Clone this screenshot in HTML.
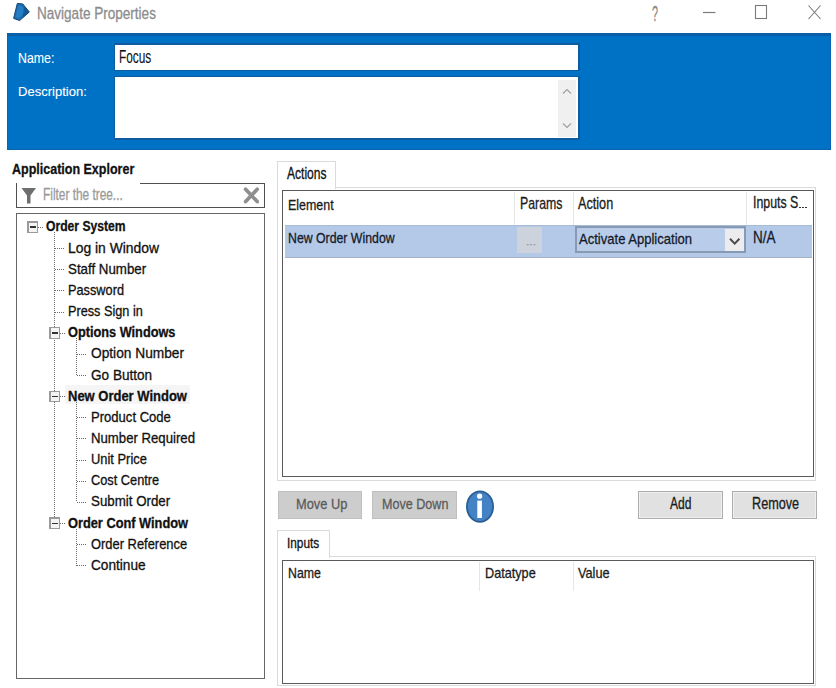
<!DOCTYPE html>
<html><head><meta charset="utf-8"><style>
html,body{margin:0;padding:0;}
body{width:836px;height:688px;position:relative;overflow:hidden;background:#fff;font-family:"Liberation Sans",sans-serif;}
.t{position:absolute;white-space:nowrap;transform-origin:0 0;}
.b{position:absolute;}
</style></head><body>
<svg class="b" style="left:0;top:0" width="836" height="32" viewBox="0 0 836 32"><path d="M17.3 3.4 L22.8 3.9 L29.3 12 L19.6 20.6 L13.6 18.4 Z" fill="#1b6db3" stroke="#0f3c68" stroke-width="0.9" stroke-linejoin="round"/><path d="M18.5 5.5 L22 6 L25.5 12 L19 18 L15.5 16.8 Z" fill="#2a86cc" opacity="0.7"/><path d="M24 6.5 L29.3 12 L22.5 18 Z" fill="#0f4a80" opacity="0.6"/><line x1="703" y1="12.5" x2="715.5" y2="12.5" stroke="#7a7a7a" stroke-width="1.2"/><rect x="755.5" y="5.5" width="11" height="13" fill="none" stroke="#7a7a7a" stroke-width="1.1"/><path d="M808.5 5.5 L820.5 19 M820.5 5.5 L808.5 19" stroke="#7a7a7a" stroke-width="1.1"/></svg>
<div class="t" style="left:36.60px;top:4.30px;font-size:16.86px;line-height:19px;transform:scaleX(0.8030);color:#8c8c8c;-webkit-text-stroke:0.3px #8c8c8c;">Navigate Properties</div>
<div class="t" style="left:652.00px;top:0.50px;font-size:21.80px;line-height:25px;transform:scaleX(0.4950);color:#8a8a8a;-webkit-text-stroke:0.3px #8a8a8a;">?</div>
<div class="b" style="left:6.5px;top:33px;width:824.0px;height:117px;background:#0072c6;border:1px solid #0a64b4;box-sizing:border-box;"></div>
<div class="b" style="left:6.5px;top:33px;width:824.0px;height:2.5px;background:#0a5ea8;"></div>
<div class="b" style="left:113.5px;top:43px;width:466.0px;height:28px;background:#0d5c9f;"></div>
<div class="b" style="left:115px;top:45px;width:463px;height:25px;background:#fff;"></div>
<div class="b" style="left:113.5px;top:75.5px;width:466.0px;height:64.0px;background:#0d5c9f;"></div>
<div class="b" style="left:115px;top:77px;width:463px;height:61px;background:#fff;"></div>
<div class="b" style="left:558px;top:80px;width:18px;height:57px;background:#f0f0f0;"></div>
<svg class="b" style="left:558px;top:80px" width="18" height="57" viewBox="0 0 18 57"><path d="M5 13.5 L9 9.5 L13 13.5" fill="none" stroke="#a0a0a0" stroke-width="1.2"/><path d="M5 43.5 L9 47.5 L13 43.5" fill="none" stroke="#a0a0a0" stroke-width="1.2"/></svg>
<div class="t" style="left:17.75px;top:49.80px;font-size:14.10px;line-height:16px;transform:scaleX(0.8754);color:#ffffff;-webkit-text-stroke:0.1px #ffffff;">Name:</div>
<div class="t" style="left:17.75px;top:83.60px;font-size:13.37px;line-height:15px;transform:scaleX(0.9751);color:#ffffff;-webkit-text-stroke:0.1px #ffffff;">Description:</div>
<div class="t" style="left:118.50px;top:46.50px;font-size:17.44px;line-height:20px;transform:scaleX(0.6801);color:#111;-webkit-text-stroke:0.1px #111;">Focus</div>
<div class="t" style="left:11.70px;top:159.80px;font-size:15.12px;line-height:17px;transform:scaleX(0.8273);color:#111;font-weight:bold;-webkit-text-stroke:0.3px #111;">Application Explorer</div>
<div class="b" style="left:15.8px;top:182.6px;width:1.5px;height:25.400000000000006px;background:#505050;"></div>
<div class="b" style="left:140px;top:182.6px;width:125px;height:1.5px;background:#505050;"></div>
<div class="b" style="left:263.6px;top:182.6px;width:1.5px;height:25.400000000000006px;background:#505050;"></div>
<div class="b" style="left:15.8px;top:206.6px;width:249.3px;height:1.5px;background:#505050;"></div>
<svg class="b" style="left:0;top:180px" width="280" height="30" viewBox="0 180 280 30"><path d="M21.5 188 L36 188 L30.5 195.5 L30.5 203.5 L27 203.5 L27 195.5 Z" fill="#6e6e6e"/><path d="M245.6 189.3 L257.2 201.6 M257.2 189.3 L245.6 201.6" stroke="#8e8e8e" stroke-width="3.7" stroke-linecap="round"/></svg>
<div class="t" style="left:43.20px;top:186.20px;font-size:15.84px;line-height:17px;transform:scaleX(0.7490);color:#9a9a9a;-webkit-text-stroke:0.3px #9a9a9a;">Filter the tree...</div>
<div class="b" style="left:15.5px;top:213px;width:249.5px;height:466px;border:1.5px solid #666;box-sizing:border-box;"></div>
<div class="b" style="left:65px;top:385px;width:125px;height:19px;background:#f5f5f6;"></div>
<div class="t" style="left:45.80px;top:218.40px;font-size:14.10px;line-height:16px;transform:scaleX(0.8618);color:#111;font-weight:bold;-webkit-text-stroke:0.3px #111;">Order System</div>
<div class="t" style="left:68.40px;top:239.56px;font-size:14.10px;line-height:16px;transform:scaleX(0.9847);color:#111;-webkit-text-stroke:0.3px #111;">Log in Window</div>
<div class="t" style="left:68.40px;top:260.72px;font-size:14.10px;line-height:16px;transform:scaleX(0.9444);color:#111;-webkit-text-stroke:0.3px #111;">Staff Number</div>
<div class="t" style="left:68.40px;top:281.88px;font-size:14.10px;line-height:16px;transform:scaleX(0.9046);color:#111;-webkit-text-stroke:0.3px #111;">Password</div>
<div class="t" style="left:68.40px;top:303.04px;font-size:14.10px;line-height:16px;transform:scaleX(0.9004);color:#111;-webkit-text-stroke:0.3px #111;">Press Sign in</div>
<div class="t" style="left:68.40px;top:324.20px;font-size:14.10px;line-height:16px;transform:scaleX(0.9039);color:#111;font-weight:bold;-webkit-text-stroke:0.3px #111;">Options Windows</div>
<div class="t" style="left:90.80px;top:345.36px;font-size:14.10px;line-height:16px;transform:scaleX(0.9738);color:#111;-webkit-text-stroke:0.3px #111;">Option Number</div>
<div class="t" style="left:90.80px;top:366.52px;font-size:14.10px;line-height:16px;transform:scaleX(0.9640);color:#111;-webkit-text-stroke:0.3px #111;">Go Button</div>
<div class="t" style="left:68.40px;top:387.68px;font-size:14.10px;line-height:16px;transform:scaleX(0.9214);color:#111;font-weight:bold;-webkit-text-stroke:0.3px #111;">New Order Window</div>
<div class="t" style="left:90.80px;top:408.84px;font-size:14.10px;line-height:16px;transform:scaleX(0.9267);color:#111;-webkit-text-stroke:0.3px #111;">Product Code</div>
<div class="t" style="left:90.80px;top:430.00px;font-size:14.10px;line-height:16px;transform:scaleX(0.9345);color:#111;-webkit-text-stroke:0.3px #111;">Number Required</div>
<div class="t" style="left:90.80px;top:451.16px;font-size:14.10px;line-height:16px;transform:scaleX(0.9146);color:#111;-webkit-text-stroke:0.3px #111;">Unit Price</div>
<div class="t" style="left:90.80px;top:472.32px;font-size:14.10px;line-height:16px;transform:scaleX(0.9067);color:#111;-webkit-text-stroke:0.3px #111;">Cost Centre</div>
<div class="t" style="left:90.80px;top:493.48px;font-size:14.10px;line-height:16px;transform:scaleX(0.9447);color:#111;-webkit-text-stroke:0.3px #111;">Submit Order</div>
<div class="t" style="left:68.40px;top:514.64px;font-size:14.10px;line-height:16px;transform:scaleX(0.9080);color:#111;font-weight:bold;-webkit-text-stroke:0.3px #111;">Order Conf Window</div>
<div class="t" style="left:90.80px;top:535.80px;font-size:14.10px;line-height:16px;transform:scaleX(0.9161);color:#111;-webkit-text-stroke:0.3px #111;">Order Reference</div>
<div class="t" style="left:90.80px;top:556.96px;font-size:14.10px;line-height:16px;transform:scaleX(0.9674);color:#111;-webkit-text-stroke:0.3px #111;">Continue</div>
<svg class="b" style="left:0;top:0" width="280" height="688" viewBox="0 0 280 688" shape-rendering="crispEdges"><rect x="38" y="227" width="1" height="1" fill="#6a6a6a"/><rect x="40" y="227" width="1" height="1" fill="#6a6a6a"/><rect x="42" y="227" width="1" height="1" fill="#6a6a6a"/><rect x="55" y="248" width="1" height="1" fill="#6a6a6a"/><rect x="57" y="248" width="1" height="1" fill="#6a6a6a"/><rect x="59" y="248" width="1" height="1" fill="#6a6a6a"/><rect x="61" y="248" width="1" height="1" fill="#6a6a6a"/><rect x="63" y="248" width="1" height="1" fill="#6a6a6a"/><rect x="55" y="269" width="1" height="1" fill="#6a6a6a"/><rect x="57" y="269" width="1" height="1" fill="#6a6a6a"/><rect x="59" y="269" width="1" height="1" fill="#6a6a6a"/><rect x="61" y="269" width="1" height="1" fill="#6a6a6a"/><rect x="63" y="269" width="1" height="1" fill="#6a6a6a"/><rect x="55" y="290" width="1" height="1" fill="#6a6a6a"/><rect x="57" y="290" width="1" height="1" fill="#6a6a6a"/><rect x="59" y="290" width="1" height="1" fill="#6a6a6a"/><rect x="61" y="290" width="1" height="1" fill="#6a6a6a"/><rect x="63" y="290" width="1" height="1" fill="#6a6a6a"/><rect x="55" y="312" width="1" height="1" fill="#6a6a6a"/><rect x="57" y="312" width="1" height="1" fill="#6a6a6a"/><rect x="59" y="312" width="1" height="1" fill="#6a6a6a"/><rect x="61" y="312" width="1" height="1" fill="#6a6a6a"/><rect x="63" y="312" width="1" height="1" fill="#6a6a6a"/><rect x="60" y="333" width="1" height="1" fill="#6a6a6a"/><rect x="62" y="333" width="1" height="1" fill="#6a6a6a"/><rect x="64" y="333" width="1" height="1" fill="#6a6a6a"/><rect x="77" y="354" width="1" height="1" fill="#6a6a6a"/><rect x="79" y="354" width="1" height="1" fill="#6a6a6a"/><rect x="81" y="354" width="1" height="1" fill="#6a6a6a"/><rect x="83" y="354" width="1" height="1" fill="#6a6a6a"/><rect x="85" y="354" width="1" height="1" fill="#6a6a6a"/><rect x="77" y="375" width="1" height="1" fill="#6a6a6a"/><rect x="79" y="375" width="1" height="1" fill="#6a6a6a"/><rect x="81" y="375" width="1" height="1" fill="#6a6a6a"/><rect x="83" y="375" width="1" height="1" fill="#6a6a6a"/><rect x="85" y="375" width="1" height="1" fill="#6a6a6a"/><rect x="60" y="396" width="1" height="1" fill="#6a6a6a"/><rect x="62" y="396" width="1" height="1" fill="#6a6a6a"/><rect x="64" y="396" width="1" height="1" fill="#6a6a6a"/><rect x="77" y="417" width="1" height="1" fill="#6a6a6a"/><rect x="79" y="417" width="1" height="1" fill="#6a6a6a"/><rect x="81" y="417" width="1" height="1" fill="#6a6a6a"/><rect x="83" y="417" width="1" height="1" fill="#6a6a6a"/><rect x="85" y="417" width="1" height="1" fill="#6a6a6a"/><rect x="77" y="438" width="1" height="1" fill="#6a6a6a"/><rect x="79" y="438" width="1" height="1" fill="#6a6a6a"/><rect x="81" y="438" width="1" height="1" fill="#6a6a6a"/><rect x="83" y="438" width="1" height="1" fill="#6a6a6a"/><rect x="85" y="438" width="1" height="1" fill="#6a6a6a"/><rect x="77" y="460" width="1" height="1" fill="#6a6a6a"/><rect x="79" y="460" width="1" height="1" fill="#6a6a6a"/><rect x="81" y="460" width="1" height="1" fill="#6a6a6a"/><rect x="83" y="460" width="1" height="1" fill="#6a6a6a"/><rect x="85" y="460" width="1" height="1" fill="#6a6a6a"/><rect x="77" y="481" width="1" height="1" fill="#6a6a6a"/><rect x="79" y="481" width="1" height="1" fill="#6a6a6a"/><rect x="81" y="481" width="1" height="1" fill="#6a6a6a"/><rect x="83" y="481" width="1" height="1" fill="#6a6a6a"/><rect x="85" y="481" width="1" height="1" fill="#6a6a6a"/><rect x="77" y="502" width="1" height="1" fill="#6a6a6a"/><rect x="79" y="502" width="1" height="1" fill="#6a6a6a"/><rect x="81" y="502" width="1" height="1" fill="#6a6a6a"/><rect x="83" y="502" width="1" height="1" fill="#6a6a6a"/><rect x="85" y="502" width="1" height="1" fill="#6a6a6a"/><rect x="60" y="523" width="1" height="1" fill="#6a6a6a"/><rect x="62" y="523" width="1" height="1" fill="#6a6a6a"/><rect x="64" y="523" width="1" height="1" fill="#6a6a6a"/><rect x="77" y="544" width="1" height="1" fill="#6a6a6a"/><rect x="79" y="544" width="1" height="1" fill="#6a6a6a"/><rect x="81" y="544" width="1" height="1" fill="#6a6a6a"/><rect x="83" y="544" width="1" height="1" fill="#6a6a6a"/><rect x="85" y="544" width="1" height="1" fill="#6a6a6a"/><rect x="77" y="565" width="1" height="1" fill="#6a6a6a"/><rect x="79" y="565" width="1" height="1" fill="#6a6a6a"/><rect x="81" y="565" width="1" height="1" fill="#6a6a6a"/><rect x="83" y="565" width="1" height="1" fill="#6a6a6a"/><rect x="85" y="565" width="1" height="1" fill="#6a6a6a"/><rect x="54" y="232" width="1" height="1" fill="#6a6a6a"/><rect x="54" y="234" width="1" height="1" fill="#6a6a6a"/><rect x="54" y="236" width="1" height="1" fill="#6a6a6a"/><rect x="54" y="238" width="1" height="1" fill="#6a6a6a"/><rect x="54" y="240" width="1" height="1" fill="#6a6a6a"/><rect x="54" y="242" width="1" height="1" fill="#6a6a6a"/><rect x="54" y="244" width="1" height="1" fill="#6a6a6a"/><rect x="54" y="246" width="1" height="1" fill="#6a6a6a"/><rect x="54" y="248" width="1" height="1" fill="#6a6a6a"/><rect x="54" y="250" width="1" height="1" fill="#6a6a6a"/><rect x="54" y="252" width="1" height="1" fill="#6a6a6a"/><rect x="54" y="254" width="1" height="1" fill="#6a6a6a"/><rect x="54" y="256" width="1" height="1" fill="#6a6a6a"/><rect x="54" y="258" width="1" height="1" fill="#6a6a6a"/><rect x="54" y="260" width="1" height="1" fill="#6a6a6a"/><rect x="54" y="262" width="1" height="1" fill="#6a6a6a"/><rect x="54" y="264" width="1" height="1" fill="#6a6a6a"/><rect x="54" y="266" width="1" height="1" fill="#6a6a6a"/><rect x="54" y="268" width="1" height="1" fill="#6a6a6a"/><rect x="54" y="270" width="1" height="1" fill="#6a6a6a"/><rect x="54" y="272" width="1" height="1" fill="#6a6a6a"/><rect x="54" y="274" width="1" height="1" fill="#6a6a6a"/><rect x="54" y="276" width="1" height="1" fill="#6a6a6a"/><rect x="54" y="278" width="1" height="1" fill="#6a6a6a"/><rect x="54" y="280" width="1" height="1" fill="#6a6a6a"/><rect x="54" y="282" width="1" height="1" fill="#6a6a6a"/><rect x="54" y="284" width="1" height="1" fill="#6a6a6a"/><rect x="54" y="286" width="1" height="1" fill="#6a6a6a"/><rect x="54" y="288" width="1" height="1" fill="#6a6a6a"/><rect x="54" y="290" width="1" height="1" fill="#6a6a6a"/><rect x="54" y="292" width="1" height="1" fill="#6a6a6a"/><rect x="54" y="294" width="1" height="1" fill="#6a6a6a"/><rect x="54" y="296" width="1" height="1" fill="#6a6a6a"/><rect x="54" y="298" width="1" height="1" fill="#6a6a6a"/><rect x="54" y="300" width="1" height="1" fill="#6a6a6a"/><rect x="54" y="302" width="1" height="1" fill="#6a6a6a"/><rect x="54" y="304" width="1" height="1" fill="#6a6a6a"/><rect x="54" y="306" width="1" height="1" fill="#6a6a6a"/><rect x="54" y="308" width="1" height="1" fill="#6a6a6a"/><rect x="54" y="310" width="1" height="1" fill="#6a6a6a"/><rect x="54" y="312" width="1" height="1" fill="#6a6a6a"/><rect x="54" y="314" width="1" height="1" fill="#6a6a6a"/><rect x="54" y="316" width="1" height="1" fill="#6a6a6a"/><rect x="54" y="318" width="1" height="1" fill="#6a6a6a"/><rect x="54" y="320" width="1" height="1" fill="#6a6a6a"/><rect x="54" y="322" width="1" height="1" fill="#6a6a6a"/><rect x="54" y="324" width="1" height="1" fill="#6a6a6a"/><rect x="54" y="326" width="1" height="1" fill="#6a6a6a"/><rect x="54" y="328" width="1" height="1" fill="#6a6a6a"/><rect x="54" y="330" width="1" height="1" fill="#6a6a6a"/><rect x="54" y="332" width="1" height="1" fill="#6a6a6a"/><rect x="54" y="334" width="1" height="1" fill="#6a6a6a"/><rect x="54" y="336" width="1" height="1" fill="#6a6a6a"/><rect x="54" y="338" width="1" height="1" fill="#6a6a6a"/><rect x="54" y="340" width="1" height="1" fill="#6a6a6a"/><rect x="54" y="342" width="1" height="1" fill="#6a6a6a"/><rect x="54" y="344" width="1" height="1" fill="#6a6a6a"/><rect x="54" y="346" width="1" height="1" fill="#6a6a6a"/><rect x="54" y="348" width="1" height="1" fill="#6a6a6a"/><rect x="54" y="350" width="1" height="1" fill="#6a6a6a"/><rect x="54" y="352" width="1" height="1" fill="#6a6a6a"/><rect x="54" y="354" width="1" height="1" fill="#6a6a6a"/><rect x="54" y="356" width="1" height="1" fill="#6a6a6a"/><rect x="54" y="358" width="1" height="1" fill="#6a6a6a"/><rect x="54" y="360" width="1" height="1" fill="#6a6a6a"/><rect x="54" y="362" width="1" height="1" fill="#6a6a6a"/><rect x="54" y="364" width="1" height="1" fill="#6a6a6a"/><rect x="54" y="366" width="1" height="1" fill="#6a6a6a"/><rect x="54" y="368" width="1" height="1" fill="#6a6a6a"/><rect x="54" y="370" width="1" height="1" fill="#6a6a6a"/><rect x="54" y="372" width="1" height="1" fill="#6a6a6a"/><rect x="54" y="374" width="1" height="1" fill="#6a6a6a"/><rect x="54" y="376" width="1" height="1" fill="#6a6a6a"/><rect x="54" y="378" width="1" height="1" fill="#6a6a6a"/><rect x="54" y="380" width="1" height="1" fill="#6a6a6a"/><rect x="54" y="382" width="1" height="1" fill="#6a6a6a"/><rect x="54" y="384" width="1" height="1" fill="#6a6a6a"/><rect x="54" y="386" width="1" height="1" fill="#6a6a6a"/><rect x="54" y="388" width="1" height="1" fill="#6a6a6a"/><rect x="54" y="390" width="1" height="1" fill="#6a6a6a"/><rect x="54" y="392" width="1" height="1" fill="#6a6a6a"/><rect x="54" y="394" width="1" height="1" fill="#6a6a6a"/><rect x="54" y="396" width="1" height="1" fill="#6a6a6a"/><rect x="54" y="398" width="1" height="1" fill="#6a6a6a"/><rect x="54" y="400" width="1" height="1" fill="#6a6a6a"/><rect x="54" y="402" width="1" height="1" fill="#6a6a6a"/><rect x="54" y="404" width="1" height="1" fill="#6a6a6a"/><rect x="54" y="406" width="1" height="1" fill="#6a6a6a"/><rect x="54" y="408" width="1" height="1" fill="#6a6a6a"/><rect x="54" y="410" width="1" height="1" fill="#6a6a6a"/><rect x="54" y="412" width="1" height="1" fill="#6a6a6a"/><rect x="54" y="414" width="1" height="1" fill="#6a6a6a"/><rect x="54" y="416" width="1" height="1" fill="#6a6a6a"/><rect x="54" y="418" width="1" height="1" fill="#6a6a6a"/><rect x="54" y="420" width="1" height="1" fill="#6a6a6a"/><rect x="54" y="422" width="1" height="1" fill="#6a6a6a"/><rect x="54" y="424" width="1" height="1" fill="#6a6a6a"/><rect x="54" y="426" width="1" height="1" fill="#6a6a6a"/><rect x="54" y="428" width="1" height="1" fill="#6a6a6a"/><rect x="54" y="430" width="1" height="1" fill="#6a6a6a"/><rect x="54" y="432" width="1" height="1" fill="#6a6a6a"/><rect x="54" y="434" width="1" height="1" fill="#6a6a6a"/><rect x="54" y="436" width="1" height="1" fill="#6a6a6a"/><rect x="54" y="438" width="1" height="1" fill="#6a6a6a"/><rect x="54" y="440" width="1" height="1" fill="#6a6a6a"/><rect x="54" y="442" width="1" height="1" fill="#6a6a6a"/><rect x="54" y="444" width="1" height="1" fill="#6a6a6a"/><rect x="54" y="446" width="1" height="1" fill="#6a6a6a"/><rect x="54" y="448" width="1" height="1" fill="#6a6a6a"/><rect x="54" y="450" width="1" height="1" fill="#6a6a6a"/><rect x="54" y="452" width="1" height="1" fill="#6a6a6a"/><rect x="54" y="454" width="1" height="1" fill="#6a6a6a"/><rect x="54" y="456" width="1" height="1" fill="#6a6a6a"/><rect x="54" y="458" width="1" height="1" fill="#6a6a6a"/><rect x="54" y="460" width="1" height="1" fill="#6a6a6a"/><rect x="54" y="462" width="1" height="1" fill="#6a6a6a"/><rect x="54" y="464" width="1" height="1" fill="#6a6a6a"/><rect x="54" y="466" width="1" height="1" fill="#6a6a6a"/><rect x="54" y="468" width="1" height="1" fill="#6a6a6a"/><rect x="54" y="470" width="1" height="1" fill="#6a6a6a"/><rect x="54" y="472" width="1" height="1" fill="#6a6a6a"/><rect x="54" y="474" width="1" height="1" fill="#6a6a6a"/><rect x="54" y="476" width="1" height="1" fill="#6a6a6a"/><rect x="54" y="478" width="1" height="1" fill="#6a6a6a"/><rect x="54" y="480" width="1" height="1" fill="#6a6a6a"/><rect x="54" y="482" width="1" height="1" fill="#6a6a6a"/><rect x="54" y="484" width="1" height="1" fill="#6a6a6a"/><rect x="54" y="486" width="1" height="1" fill="#6a6a6a"/><rect x="54" y="488" width="1" height="1" fill="#6a6a6a"/><rect x="54" y="490" width="1" height="1" fill="#6a6a6a"/><rect x="54" y="492" width="1" height="1" fill="#6a6a6a"/><rect x="54" y="494" width="1" height="1" fill="#6a6a6a"/><rect x="54" y="496" width="1" height="1" fill="#6a6a6a"/><rect x="54" y="498" width="1" height="1" fill="#6a6a6a"/><rect x="54" y="500" width="1" height="1" fill="#6a6a6a"/><rect x="54" y="502" width="1" height="1" fill="#6a6a6a"/><rect x="54" y="504" width="1" height="1" fill="#6a6a6a"/><rect x="54" y="506" width="1" height="1" fill="#6a6a6a"/><rect x="54" y="508" width="1" height="1" fill="#6a6a6a"/><rect x="54" y="510" width="1" height="1" fill="#6a6a6a"/><rect x="54" y="512" width="1" height="1" fill="#6a6a6a"/><rect x="54" y="514" width="1" height="1" fill="#6a6a6a"/><rect x="54" y="516" width="1" height="1" fill="#6a6a6a"/><rect x="54" y="518" width="1" height="1" fill="#6a6a6a"/><rect x="76" y="338" width="1" height="1" fill="#6a6a6a"/><rect x="76" y="340" width="1" height="1" fill="#6a6a6a"/><rect x="76" y="342" width="1" height="1" fill="#6a6a6a"/><rect x="76" y="344" width="1" height="1" fill="#6a6a6a"/><rect x="76" y="346" width="1" height="1" fill="#6a6a6a"/><rect x="76" y="348" width="1" height="1" fill="#6a6a6a"/><rect x="76" y="350" width="1" height="1" fill="#6a6a6a"/><rect x="76" y="352" width="1" height="1" fill="#6a6a6a"/><rect x="76" y="354" width="1" height="1" fill="#6a6a6a"/><rect x="76" y="356" width="1" height="1" fill="#6a6a6a"/><rect x="76" y="358" width="1" height="1" fill="#6a6a6a"/><rect x="76" y="360" width="1" height="1" fill="#6a6a6a"/><rect x="76" y="362" width="1" height="1" fill="#6a6a6a"/><rect x="76" y="364" width="1" height="1" fill="#6a6a6a"/><rect x="76" y="366" width="1" height="1" fill="#6a6a6a"/><rect x="76" y="368" width="1" height="1" fill="#6a6a6a"/><rect x="76" y="370" width="1" height="1" fill="#6a6a6a"/><rect x="76" y="372" width="1" height="1" fill="#6a6a6a"/><rect x="76" y="374" width="1" height="1" fill="#6a6a6a"/><rect x="76" y="402" width="1" height="1" fill="#6a6a6a"/><rect x="76" y="404" width="1" height="1" fill="#6a6a6a"/><rect x="76" y="406" width="1" height="1" fill="#6a6a6a"/><rect x="76" y="408" width="1" height="1" fill="#6a6a6a"/><rect x="76" y="410" width="1" height="1" fill="#6a6a6a"/><rect x="76" y="412" width="1" height="1" fill="#6a6a6a"/><rect x="76" y="414" width="1" height="1" fill="#6a6a6a"/><rect x="76" y="416" width="1" height="1" fill="#6a6a6a"/><rect x="76" y="418" width="1" height="1" fill="#6a6a6a"/><rect x="76" y="420" width="1" height="1" fill="#6a6a6a"/><rect x="76" y="422" width="1" height="1" fill="#6a6a6a"/><rect x="76" y="424" width="1" height="1" fill="#6a6a6a"/><rect x="76" y="426" width="1" height="1" fill="#6a6a6a"/><rect x="76" y="428" width="1" height="1" fill="#6a6a6a"/><rect x="76" y="430" width="1" height="1" fill="#6a6a6a"/><rect x="76" y="432" width="1" height="1" fill="#6a6a6a"/><rect x="76" y="434" width="1" height="1" fill="#6a6a6a"/><rect x="76" y="436" width="1" height="1" fill="#6a6a6a"/><rect x="76" y="438" width="1" height="1" fill="#6a6a6a"/><rect x="76" y="440" width="1" height="1" fill="#6a6a6a"/><rect x="76" y="442" width="1" height="1" fill="#6a6a6a"/><rect x="76" y="444" width="1" height="1" fill="#6a6a6a"/><rect x="76" y="446" width="1" height="1" fill="#6a6a6a"/><rect x="76" y="448" width="1" height="1" fill="#6a6a6a"/><rect x="76" y="450" width="1" height="1" fill="#6a6a6a"/><rect x="76" y="452" width="1" height="1" fill="#6a6a6a"/><rect x="76" y="454" width="1" height="1" fill="#6a6a6a"/><rect x="76" y="456" width="1" height="1" fill="#6a6a6a"/><rect x="76" y="458" width="1" height="1" fill="#6a6a6a"/><rect x="76" y="460" width="1" height="1" fill="#6a6a6a"/><rect x="76" y="462" width="1" height="1" fill="#6a6a6a"/><rect x="76" y="464" width="1" height="1" fill="#6a6a6a"/><rect x="76" y="466" width="1" height="1" fill="#6a6a6a"/><rect x="76" y="468" width="1" height="1" fill="#6a6a6a"/><rect x="76" y="470" width="1" height="1" fill="#6a6a6a"/><rect x="76" y="472" width="1" height="1" fill="#6a6a6a"/><rect x="76" y="474" width="1" height="1" fill="#6a6a6a"/><rect x="76" y="476" width="1" height="1" fill="#6a6a6a"/><rect x="76" y="478" width="1" height="1" fill="#6a6a6a"/><rect x="76" y="480" width="1" height="1" fill="#6a6a6a"/><rect x="76" y="482" width="1" height="1" fill="#6a6a6a"/><rect x="76" y="484" width="1" height="1" fill="#6a6a6a"/><rect x="76" y="486" width="1" height="1" fill="#6a6a6a"/><rect x="76" y="488" width="1" height="1" fill="#6a6a6a"/><rect x="76" y="490" width="1" height="1" fill="#6a6a6a"/><rect x="76" y="492" width="1" height="1" fill="#6a6a6a"/><rect x="76" y="494" width="1" height="1" fill="#6a6a6a"/><rect x="76" y="496" width="1" height="1" fill="#6a6a6a"/><rect x="76" y="498" width="1" height="1" fill="#6a6a6a"/><rect x="76" y="500" width="1" height="1" fill="#6a6a6a"/><rect x="76" y="529" width="1" height="1" fill="#6a6a6a"/><rect x="76" y="531" width="1" height="1" fill="#6a6a6a"/><rect x="76" y="533" width="1" height="1" fill="#6a6a6a"/><rect x="76" y="535" width="1" height="1" fill="#6a6a6a"/><rect x="76" y="537" width="1" height="1" fill="#6a6a6a"/><rect x="76" y="539" width="1" height="1" fill="#6a6a6a"/><rect x="76" y="541" width="1" height="1" fill="#6a6a6a"/><rect x="76" y="543" width="1" height="1" fill="#6a6a6a"/><rect x="76" y="545" width="1" height="1" fill="#6a6a6a"/><rect x="76" y="547" width="1" height="1" fill="#6a6a6a"/><rect x="76" y="549" width="1" height="1" fill="#6a6a6a"/><rect x="76" y="551" width="1" height="1" fill="#6a6a6a"/><rect x="76" y="553" width="1" height="1" fill="#6a6a6a"/><rect x="76" y="555" width="1" height="1" fill="#6a6a6a"/><rect x="76" y="557" width="1" height="1" fill="#6a6a6a"/><rect x="76" y="559" width="1" height="1" fill="#6a6a6a"/><rect x="76" y="561" width="1" height="1" fill="#6a6a6a"/><rect x="76" y="563" width="1" height="1" fill="#6a6a6a"/><rect x="76" y="565" width="1" height="1" fill="#6a6a6a"/><rect x="28.0" y="221.9" width="9.5" height="10.5" fill="#f4f4f4" stroke="#9a9a9a" stroke-width="1.3"/><line x1="30.0" y1="227.15" x2="35.5" y2="227.15" stroke="#333" stroke-width="1.4"/><rect x="50.0" y="327.7" width="9.5" height="10.5" fill="#f4f4f4" stroke="#9a9a9a" stroke-width="1.3"/><line x1="52.0" y1="332.95" x2="57.5" y2="332.95" stroke="#333" stroke-width="1.4"/><rect x="50.0" y="391.18" width="9.5" height="10.5" fill="#f4f4f4" stroke="#9a9a9a" stroke-width="1.3"/><line x1="52.0" y1="396.43" x2="57.5" y2="396.43" stroke="#333" stroke-width="1.4"/><rect x="50.0" y="518.14" width="9.5" height="10.5" fill="#f4f4f4" stroke="#9a9a9a" stroke-width="1.3"/><line x1="52.0" y1="523.39" x2="57.5" y2="523.39" stroke="#333" stroke-width="1.4"/></svg>
<div class="b" style="left:277px;top:187px;width:538.5px;height:293.5px;border:1.5px solid #dadada;box-sizing:border-box;"></div>
<div class="b" style="left:277px;top:160.5px;width:59px;height:28.0px;border:1.5px solid #dadada;border-bottom:none;box-sizing:border-box;background:#fff;"></div>
<div class="t" style="left:286.50px;top:164.30px;font-size:16.42px;line-height:18px;transform:scaleX(0.7334);color:#111;-webkit-text-stroke:0.3px #111;">Actions</div>
<div class="b" style="left:282px;top:190px;width:531.5px;height:286.5px;border:1.5px solid #5a5a5a;box-sizing:border-box;background:#fff;"></div>
<div class="b" style="left:514px;top:192px;width:1px;height:33px;background:#e6e6e6;"></div>
<div class="b" style="left:573px;top:192px;width:1px;height:33px;background:#e6e6e6;"></div>
<div class="b" style="left:746px;top:192px;width:1px;height:33px;background:#e6e6e6;"></div>
<div class="t" style="left:288.00px;top:196.80px;font-size:14.68px;line-height:16px;transform:scaleX(0.8468);color:#1b1b1b;-webkit-text-stroke:0.3px #1b1b1b;">Element</div>
<div class="t" style="left:520.00px;top:195.40px;font-size:15.70px;line-height:17px;transform:scaleX(0.7840);color:#1b1b1b;-webkit-text-stroke:0.3px #1b1b1b;">Params</div>
<div class="t" style="left:578.20px;top:195.40px;font-size:15.70px;line-height:17px;transform:scaleX(0.8069);color:#1b1b1b;-webkit-text-stroke:0.3px #1b1b1b;">Action</div>
<div class="t" style="left:752.70px;top:194.30px;font-size:15.84px;line-height:17px;transform:scaleX(0.7793);color:#1b1b1b;-webkit-text-stroke:0.3px #1b1b1b;">Inputs S</div>
<div class="b" style="left:799px;top:206.5px;width:2px;height:1.5px;background:#333;"></div>
<div class="b" style="left:802px;top:206.5px;width:2px;height:1.5px;background:#333;"></div>
<div class="b" style="left:805px;top:206.5px;width:2px;height:1.5px;background:#333;"></div>
<div class="b" style="left:284.5px;top:224.6px;width:527.5px;height:33.70000000000002px;background:#b4c9e8;"></div>
<div class="b" style="left:284.5px;top:224.6px;width:527.5px;height:1.200000000000017px;background:#a9bcd6;"></div>
<div class="b" style="left:284.5px;top:256.8px;width:527.5px;height:1.6999999999999886px;background:#a3b2c6;"></div>
<div class="b" style="left:517px;top:226.5px;width:25px;height:26.5px;background:#cdd3dc;"></div>
<div class="t" style="left:526.00px;top:240.50px;font-size:4.36px;line-height:5px;transform:scaleX(2.7531);color:#888;-webkit-text-stroke:0.3px #888;">...</div>
<div class="b" style="left:574.5px;top:226px;width:171.29999999999995px;height:27.30000000000001px;border:2px solid #8799b3;box-sizing:border-box;background:#b9cdeb;"></div>
<div class="b" style="left:724.5px;top:229px;width:19.5px;height:22.30000000000001px;background:#ececee;"></div>
<svg class="b" style="left:725px;top:229px" width="19" height="22" viewBox="0 0 19 22"><path d="M5 9.8 L9.7 14.6 L14.4 9.8" fill="none" stroke="#4a4a4a" stroke-width="2"/></svg>
<div class="t" style="left:288.00px;top:229.80px;font-size:14.68px;line-height:16px;transform:scaleX(0.8381);color:#141a2a;-webkit-text-stroke:0.3px #141a2a;">New Order Window</div>
<div class="t" style="left:578.90px;top:229.80px;font-size:15.55px;line-height:17px;transform:scaleX(0.8386);color:#141a2a;-webkit-text-stroke:0.3px #141a2a;">Activate Application</div>
<div class="t" style="left:752.70px;top:228.20px;font-size:16.86px;line-height:19px;transform:scaleX(0.8005);color:#141a2a;-webkit-text-stroke:0.3px #141a2a;">N/A</div>
<div class="b" style="left:278px;top:491.2px;width:84.30000000000001px;height:28.099999999999966px;background:#cdcdcd;border:1.2px solid #bfbfbf;box-sizing:border-box;"></div>
<div class="b" style="left:372px;top:491.2px;width:84.80000000000001px;height:28.099999999999966px;background:#cdcdcd;border:1.2px solid #bfbfbf;box-sizing:border-box;"></div>
<div class="t" style="left:295.90px;top:495.30px;font-size:15.55px;line-height:17px;transform:scaleX(0.8260);color:#5a5a5a;-webkit-text-stroke:0.3px #5a5a5a;">Move Up</div>
<div class="t" style="left:381.80px;top:495.30px;font-size:15.55px;line-height:17px;transform:scaleX(0.8086);color:#5a5a5a;-webkit-text-stroke:0.3px #5a5a5a;">Move Down</div>
<div class="b" style="left:638.2px;top:490.8px;width:84.59999999999991px;height:28.599999999999966px;background:#e1e1e1;border:1.5px solid #adadad;box-shadow:inset 0 0 0 1px #efefef;box-sizing:border-box;"></div>
<div class="b" style="left:732.3px;top:490.8px;width:84.30000000000007px;height:28.599999999999966px;background:#e1e1e1;border:1.5px solid #adadad;box-shadow:inset 0 0 0 1px #efefef;box-sizing:border-box;"></div>
<div class="t" style="left:669.50px;top:494.20px;font-size:16.28px;line-height:18px;transform:scaleX(0.7424);color:#1b1b1b;-webkit-text-stroke:0.3px #1b1b1b;">Add</div>
<div class="t" style="left:751.50px;top:494.20px;font-size:16.28px;line-height:18px;transform:scaleX(0.7786);color:#1b1b1b;-webkit-text-stroke:0.3px #1b1b1b;">Remove</div>
<svg class="b" style="left:460px;top:485px" width="40" height="45" viewBox="460 485 40 45"><ellipse cx="480" cy="506.6" rx="13.1" ry="15.2" fill="#4382c4" stroke="#2d5f94" stroke-width="1.8"/><ellipse cx="479.6" cy="496.2" rx="2.6" ry="2.6" fill="#fff"/><rect x="477.3" y="500.6" width="4.6" height="17.4" fill="#fff"/></svg>
<div class="b" style="left:277px;top:556px;width:538.5px;height:130px;border:1.5px solid #dadada;box-sizing:border-box;"></div>
<div class="b" style="left:277px;top:530px;width:53px;height:27.5px;border:1.5px solid #dadada;border-bottom:none;box-sizing:border-box;background:#fff;"></div>
<div class="t" style="left:286.50px;top:534.70px;font-size:14.10px;line-height:16px;transform:scaleX(0.8384);color:#111;-webkit-text-stroke:0.3px #111;">Inputs</div>
<div class="b" style="left:282px;top:559.5px;width:531.5px;height:124.5px;border:1.5px solid #5a5a5a;box-sizing:border-box;background:#fff;"></div>
<div class="b" style="left:479px;top:562px;width:1px;height:29px;background:#e6e6e6;"></div>
<div class="b" style="left:573px;top:562px;width:1px;height:29px;background:#e6e6e6;"></div>
<div class="t" style="left:288.10px;top:565.30px;font-size:14.10px;line-height:16px;transform:scaleX(0.8746);color:#1b1b1b;-webkit-text-stroke:0.3px #1b1b1b;">Name</div>
<div class="t" style="left:485.30px;top:565.00px;font-size:14.54px;line-height:16px;transform:scaleX(0.8716);color:#1b1b1b;-webkit-text-stroke:0.3px #1b1b1b;">Datatype</div>
<div class="t" style="left:578.10px;top:565.00px;font-size:14.54px;line-height:16px;transform:scaleX(0.8756);color:#1b1b1b;-webkit-text-stroke:0.3px #1b1b1b;">Value</div>
</body></html>
